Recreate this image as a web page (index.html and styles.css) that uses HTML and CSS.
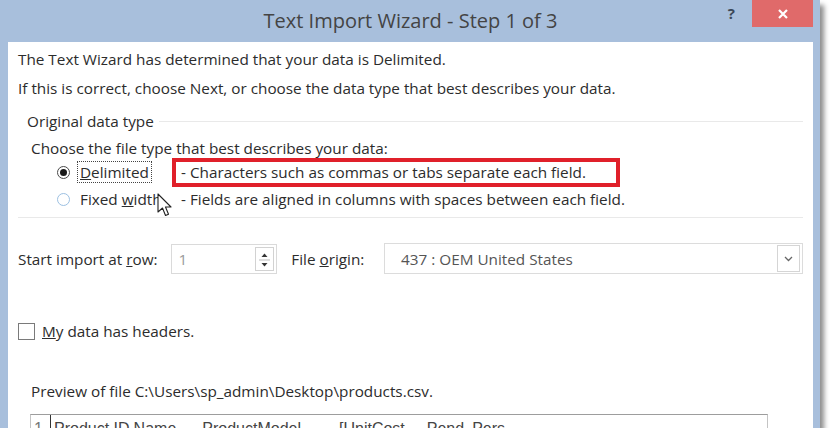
FILE: index.html
```html
<!DOCTYPE html>
<html lang="en">
<head>
  <meta charset="UTF-8">
  <title>Text Import Wizard - Step 1 of 3</title>
  <link rel="stylesheet" href="styles.css">
</head>
<body>

  <div class="dialog">
    <div class="titlebar">
      <span></span>
      <div class="title">Text Import Wizard - Step 1 of 3</div>
      <div class="controls">
        <span class="help">?</span>
        <span class="close">
          <svg width="10" height="10" viewBox="0 0 10 10"><path d="M1 1 L9 9 M9 1 L1 9" stroke="#fff" stroke-width="2.2" fill="none"/></svg>
        </span>
      </div>
    </div>

    <div class="content">
      <p class="intro">The Text Wizard has determined that your data is Delimited.</p>
      <p class="intro">If this is correct, choose Next, or choose the data type that best describes your data.</p>

      <div class="group">
        <div class="group-head"><span>Original data type</span></div>
        <div class="prompt">Choose the file type that best describes your data:</div>

        <div class="option first">
          <span class="radio on"></span>
          <span class="label"><span class="name focus"><u>D</u>elimited</span></span>
          <span class="desc marked">- Characters such as commas or tabs separate each field.</span>
        </div>

        <div class="option">
          <span class="radio"></span>
          <span class="label"><span class="name">Fixed <u>w</u>idth</span></span>
          <span class="desc">- Fields are aligned in columns with spaces between each field.</span>
          <svg class="pointer" width="15" height="25" viewBox="0 0 15 25">
            <path d="M1 1 L1 19 L5.5 15 L8.5 22.5 L11.5 21.2 L8.5 14 L14 14 Z" fill="#fff" stroke="#222" stroke-width="1.1" stroke-linejoin="round"/>
          </svg>
        </div>
      </div>

      <div class="import-row">
        <span class="row-label">Start import at <u>r</u>ow:</span>
        <div class="spin">
          <span class="spin-val">1</span>
          <span class="spin-btns">
            <svg width="17" height="24" viewBox="0 0 17 24">
              <path d="M5.5 9 L8.5 5.5 L11.5 9 Z" fill="#333"/>
              <line x1="3" y1="12" x2="14" y2="12" stroke="#bbb" stroke-width="1"/>
              <path d="M5.5 15 L8.5 18.5 L11.5 15 Z" fill="#333"/>
            </svg>
          </span>
        </div>
        <span class="origin-label">File <u>o</u>rigin:</span>
        <div class="select">
          <span>437 : OEM United States</span>
          <span class="select-btn">
            <svg width="9" height="6" viewBox="0 0 9 6"><path d="M1 1 L4.5 4.5 L8 1" stroke="#666" stroke-width="1.3" fill="none"/></svg>
          </span>
        </div>
      </div>

      <label class="check">
        <span class="box"></span>
        <span><u>M</u>y data has headers.</span>
      </label>

      <div class="preview-label">Preview of file C:\Users\sp_admin\Desktop\products.csv.</div>

      <div class="preview">
        <div class="preview-text">
          <span class="preview-num">1</span>
          <span class="preview-line">
            <span class="col">Product ID</span><span class="col c2">Name</span><span class="col c3">ProductModel</span><span class="col c4">[UnitCost</span><span class="col c5">Pend</span><span class="col c6">Pers</span>
          </span>
        </div>
        <div class="scroll">
          <svg width="11" height="7" viewBox="0 0 11 7"><path d="M1 6 L5.5 1.5 L10 6" stroke="#555" stroke-width="1.3" fill="none"/></svg>
        </div>
      </div>
    </div>
  </div>

</body>
</html>
```

FILE: styles.css
```css
* { box-sizing: border-box; }

body {
  margin: 0;
  background: #fff;
  font-family: "Open Sans", "Noto Sans", sans-serif;
  font-size: 15.3px;
  color: #2c2c2c;
}

/* window frame */
.dialog {
  width: 820px;
  height: 428px;
  overflow: hidden;
  background: #fff;
  border-left: 8px solid #a8bfdc;
  border-right: 7px solid #a8bfdc;
  box-shadow: 4px 5px 5px rgba(0, 0, 0, 0.45);
}

.titlebar {
  height: 42px;
  background: #a8bfdc;
  display: grid;
  grid-template-columns: 1fr auto 1fr;
}

.title {
  font-size: 20px;
  line-height: 42px;
  color: #444;
  white-space: nowrap;
}

.controls {
  display: flex;
  justify-content: flex-end;
  align-items: flex-start;
}

.help {
  font-weight: bold;
  font-size: 15px;
  line-height: 27px;
  color: #3b4858;
  margin-right: 17px;
}

.close {
  width: 61px;
  height: 27px;
  background: #e06a6a;
  display: flex;
  align-items: center;
  justify-content: center;
}

/* body */
.content {
  padding: 7px 10px 0;
}

.intro {
  margin: 0 0 9px;
  line-height: 20px;
}

.group {
  margin-top: 13px;
  padding-bottom: 6px;
  border-bottom: 1px solid #e9e9e9;
}

.group-head {
  display: flex;
  align-items: center;
  height: 20px;
}

.group-head span {
  padding: 0 5px 0 9px;
}

.group-head::after {
  content: "";
  flex: 1;
  height: 1px;
  background: #e9e9e9;
}

.prompt {
  margin: 7px 0 0 13px;
  line-height: 20px;
}

.option {
  position: relative;
  display: flex;
  align-items: center;
  height: 24px;
  padding-left: 39px;
  margin-top: 3px;
}

.option.first {
  margin-top: 2px;
}

.radio {
  flex: none;
  width: 13px;
  height: 13px;
  border-radius: 50%;
  border: 1px solid #9cc0e2;
}

.radio.on {
  border-color: #4a4a4a;
  display: flex;
  align-items: center;
  justify-content: center;
}

.radio.on::after {
  content: "";
  width: 7px;
  height: 7px;
  border-radius: 50%;
  background: #1a1a1a;
}

.label {
  flex: none;
  width: 102px;
  white-space: nowrap;
}

.name {
  margin-left: 7px;
  padding: 0 2px;
  border: 1px dotted transparent;
}

.name.focus {
  border-color: #444;
}

.desc {
  padding-left: 9px;
  white-space: nowrap;
}

.desc.marked {
  width: 448px;
  height: 29px;
  line-height: 21px;
  padding: 0 5px;
  border: 4px solid #e0202a;
}

.pointer {
  position: absolute;
  left: 139px;
  top: 6px;
}

/* start row / origin */
.import-row {
  display: flex;
  align-items: center;
  height: 31px;
  margin-top: 25px;
}

.row-label {
  width: 153px;
  white-space: nowrap;
}

.spin {
  width: 107px;
  height: 30px;
  border: 1px solid #dadada;
  display: flex;
}

.spin-val {
  flex: 1;
  padding-left: 7px;
  line-height: 28px;
  color: #9a9a9a;
}

.spin-btns {
  width: 19px;
  margin: 2px 2px 2px 0;
  border: 1px solid #d2d2d2;
  display: flex;
}

.origin-label {
  width: 93px;
  margin-left: 14px;
}

.select {
  width: 420px;
  height: 31px;
  border: 1px solid #dcdcdc;
  display: flex;
  align-items: center;
  padding-left: 16px;
  color: #555;
}

.select-btn {
  margin-left: auto;
  margin-right: 2px;
  width: 23px;
  height: 27px;
  border: 1px solid #d5d5d5;
  display: flex;
  align-items: center;
  justify-content: center;
}

.check {
  display: flex;
  align-items: center;
  height: 20px;
  margin-top: 47px;
}

.box {
  width: 17px;
  height: 17px;
  border: 1px solid #7a7a7a;
  margin-right: 7px;
}

.preview-label {
  margin: 40px 0 0 13px;
  line-height: 20px;
}

/* file preview, cut by the frame */
.preview {
  display: flex;
  margin: 13px 0 0 12px;
}

.preview-text {
  width: 738px;
  height: 40px;
  border: 1px solid #c4c4c4;
  border-top-color: #9d9d9d;
  display: flex;
  font-family: "Liberation Sans", sans-serif;
  font-size: 16px;
  line-height: 20px;
  color: #444;
}

.preview-num {
  width: 20px;
  padding: 4px 0 0 3px;
  border-right: 1px solid #333;
  color: #777;
}

.preview-line {
  padding: 4px 0 0 3px;
  white-space: nowrap;
}

.col { display: inline-block; }
.c2 { margin-left: 4px; }
.c3 { margin-left: 26px; }
.c4 { margin-left: 38px; }
.c5 { margin-left: 22px; }
.c6 { margin-left: 8px; }

.scroll {
  width: 28px;
  padding: 9px 0 0 9px;
}
```
